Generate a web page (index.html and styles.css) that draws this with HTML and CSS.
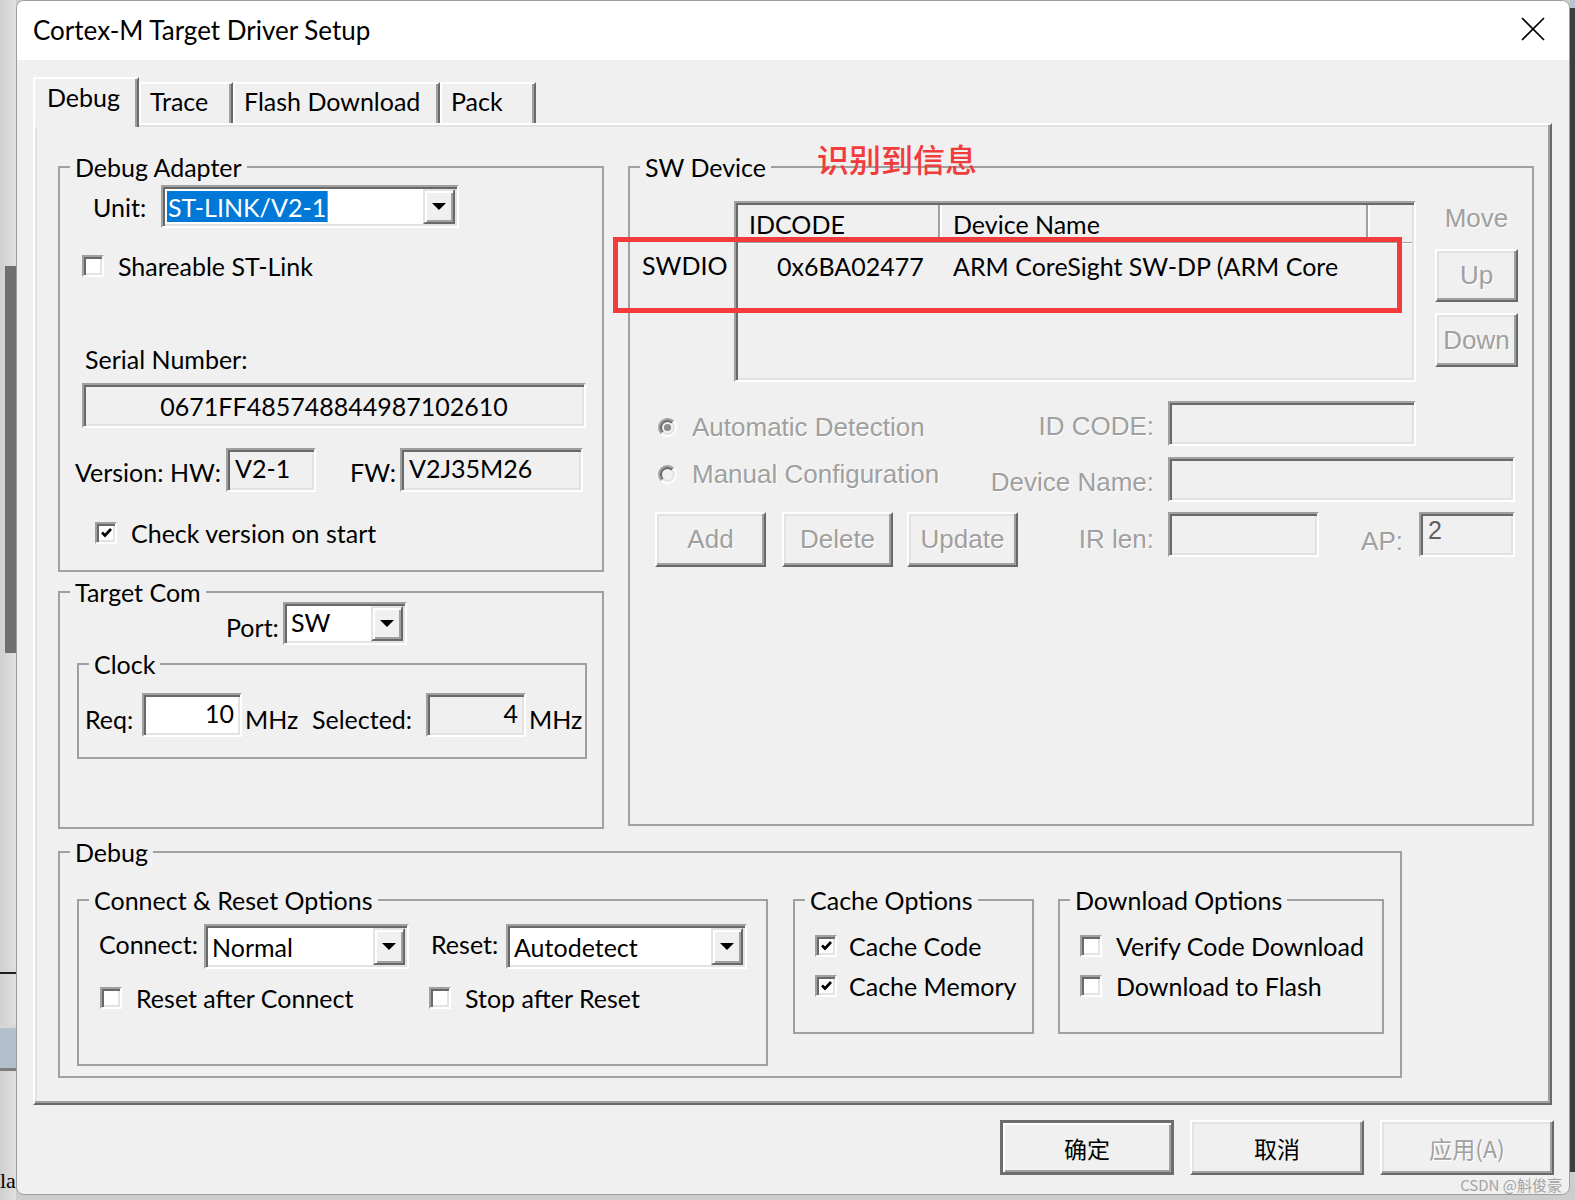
FILE: index.html
```html
<!DOCTYPE html>
<html lang="en">
<head>
<meta charset="utf-8">
<title>Cortex-M Target Driver Setup</title>
<link rel="stylesheet" href="styles.css">
</head>
<body>
<div class="screen">
  <div class="bg-left">
    <div class="thumb"></div>
    <div class="bl-line"></div>
    <div class="bl-band"></div>
    <div class="bl-text">la</div>
  </div>

  <div class="dialog">
    <div class="titlebar">
      <span class="title">Cortex-M Target Driver Setup</span>
      <span class="close"><svg width="24" height="24" viewBox="0 0 24 24"><path d="M1 1 L23 23 M23 1 L1 23" stroke="#000" stroke-width="1.7" fill="none"/></svg></span>
    </div>

    <div class="dbody">
      <div class="tabs">
        <div class="tab sel t-debug">Debug</div>
        <div class="tab t-trace">Trace</div>
        <div class="tab t-flash">Flash Download</div>
        <div class="tab t-pack">Pack</div>
      </div>

      <div class="panel">
        <div class="top">
          <div class="lcol">
            <fieldset class="group g-adapter">
              <legend>Debug Adapter</legend>
              <div class="unit-row">
                <span class="lbl">Unit:</span>
                <div class="combo c-unit">
                  <span class="combo-text"><span class="hl">ST-LINK/V2-1</span></span>
                  <span class="combo-btn"><svg width="14" height="7" viewBox="0 0 14 7"><polygon points="0,0 14,0 7,7" fill="#000"/></svg></span>
                </div>
              </div>
              <div class="chk chk-share"><span class="box"></span><span>Shareable ST-Link</span></div>
              <div class="serial-lbl">Serial Number:</div>
              <div class="field f-serial">0671FF485748844987102610</div>
              <div class="ver-row">
                <span class="l1">Version: HW:</span>
                <div class="field f-hw">V2-1</div>
                <span class="l2">FW:</span>
                <div class="field f-fw">V2J35M26</div>
              </div>
              <div class="chk chk-ver"><span class="box"><svg width="13" height="13" viewBox="0 0 13 13"><polyline points="2,6.5 5,9.5 11,3" fill="none" stroke="#000" stroke-width="2.6"/></svg></span><span>Check version on start</span></div>
            </fieldset>

            <fieldset class="group g-target">
              <legend>Target Com</legend>
              <div class="port-row">
                <span class="lbl">Port:</span>
                <div class="combo c-port">
                  <span class="combo-text">SW</span>
                  <span class="combo-btn"><svg width="14" height="7" viewBox="0 0 14 7"><polygon points="0,0 14,0 7,7" fill="#000"/></svg></span>
                </div>
              </div>
              <fieldset class="group g-clock">
                <legend>Clock</legend>
                <div class="req-row">
                  <span class="l-req lowlbl">Req:</span>
                  <div class="field f-req"><span class="num">10</span></div>
                  <span class="mhz lowlbl">MHz</span>
                  <span class="l-sel lowlbl">Selected:</span>
                  <div class="field f-sel"><span class="num">4</span></div>
                  <span class="mhz2 lowlbl">MHz</span>
                </div>
              </fieldset>
            </fieldset>
          </div>

          <fieldset class="group g-sw">
            <legend>SW Device</legend>
            <div class="dev-area">
              <div class="dev-rowhdr"><div class="swdio">SWDIO</div></div>
              <div class="table">
                <div class="thead">
                  <div class="h1">IDCODE</div>
                  <div class="h2">Device Name</div>
                  <div class="h3"></div>
                </div>
                <div class="trow">
                  <div class="c1">0x6BA02477</div>
                  <div class="c2">ARM CoreSight SW-DP (ARM Core</div>
                </div>
              </div>
              <div class="move-col">
                <div class="move-lbl dis">Move</div>
                <div class="btn btn-up dis">Up</div>
                <div class="btn btn-down dis">Down</div>
              </div>
            </div>

            <div class="opt-row row-a">
              <div class="radio radio-a dis">
                <svg width="19" height="19" viewBox="0 0 19 19"><circle cx="9.5" cy="9.5" r="8.5" fill="#f0f0f0"/><path d="M3.49 15.51 A8.5 8.5 0 0 1 15.51 3.49" fill="none" stroke="#a0a0a0" stroke-width="2"/><path d="M4.9 14.1 A6.5 6.5 0 0 1 14.1 4.9" fill="none" stroke="#696969" stroke-width="2"/><path d="M15.51 3.49 A8.5 8.5 0 0 1 3.49 15.51" fill="none" stroke="#ffffff" stroke-width="2"/><path d="M14.1 4.9 A6.5 6.5 0 0 1 4.9 14.1" fill="none" stroke="#e3e3e3" stroke-width="2"/><circle cx="9.5" cy="9.5" r="3.6" fill="#8c8c8c"/></svg>
                <span>Automatic Detection</span>
              </div>
              <span class="flbl flbl-a dis">ID CODE:</span>
              <div class="field f-id"></div>
            </div>

            <div class="opt-row row-b">
              <div class="radio radio-b dis">
                <svg width="19" height="19" viewBox="0 0 19 19"><circle cx="9.5" cy="9.5" r="8.5" fill="#f0f0f0"/><path d="M3.49 15.51 A8.5 8.5 0 0 1 15.51 3.49" fill="none" stroke="#a0a0a0" stroke-width="2"/><path d="M4.9 14.1 A6.5 6.5 0 0 1 14.1 4.9" fill="none" stroke="#696969" stroke-width="2"/><path d="M15.51 3.49 A8.5 8.5 0 0 1 3.49 15.51" fill="none" stroke="#ffffff" stroke-width="2"/><path d="M14.1 4.9 A6.5 6.5 0 0 1 4.9 14.1" fill="none" stroke="#e3e3e3" stroke-width="2"/></svg>
                <span>Manual Configuration</span>
              </div>
              <span class="flbl flbl-b dis">Device Name:</span>
              <div class="field f-dn"></div>
            </div>

            <div class="opt-row row-c">
              <div class="btns">
                <div class="btn b-add dis">Add</div>
                <div class="btn b-del dis">Delete</div>
                <div class="btn b-upd dis">Update</div>
              </div>
              <span class="flbl-ir dis">IR len:</span>
              <div class="field f-ir"></div>
              <span class="ap-lbl dis">AP:</span>
              <div class="field f-ap"><span class="ap-val">2</span></div>
            </div>
          </fieldset>
        </div>

        <fieldset class="group g-debug">
          <legend>Debug</legend>
          <div class="dbg-inner">
            <fieldset class="group g-conn">
              <legend>Connect &amp; Reset Options</legend>
              <div class="conn-row">
                <span class="l-conn">Connect:</span>
                <div class="combo c-conn">
                  <span class="combo-text">Normal</span>
                  <span class="combo-btn"><svg width="14" height="7" viewBox="0 0 14 7"><polygon points="0,0 14,0 7,7" fill="#000"/></svg></span>
                </div>
                <span class="l-reset">Reset:</span>
                <div class="combo c-reset">
                  <span class="combo-text">Autodetect</span>
                  <span class="combo-btn"><svg width="14" height="7" viewBox="0 0 14 7"><polygon points="0,0 14,0 7,7" fill="#000"/></svg></span>
                </div>
              </div>
              <div class="chk-row">
                <div class="chk chk-rac"><span class="box"></span><span>Reset after Connect</span></div>
                <div class="chk"><span class="box"></span><span>Stop after Reset</span></div>
              </div>
            </fieldset>

            <fieldset class="group g-cache">
              <legend>Cache Options</legend>
              <div class="chk opt-chk"><span class="box"><svg width="13" height="13" viewBox="0 0 13 13"><polyline points="2,6.5 5,9.5 11,3" fill="none" stroke="#000" stroke-width="2.6"/></svg></span><span>Cache Code</span></div>
              <div class="chk opt-chk"><span class="box"><svg width="13" height="13" viewBox="0 0 13 13"><polyline points="2,6.5 5,9.5 11,3" fill="none" stroke="#000" stroke-width="2.6"/></svg></span><span>Cache Memory</span></div>
            </fieldset>

            <fieldset class="group g-dl">
              <legend>Download Options</legend>
              <div class="chk opt-chk"><span class="box"></span><span>Verify Code Download</span></div>
              <div class="chk opt-chk"><span class="box"></span><span>Download to Flash</span></div>
            </fieldset>
          </div>
        </fieldset>
      </div>

      <div class="btnrow">
        <div class="btn dbtn def">确定</div>
        <div class="btn dbtn">取消</div>
        <div class="btn dbtn dis-cjk">应用(A)</div>
      </div>
    </div>

    <div class="annot-text">识别到信息</div>
    <div class="annot-box"></div>
    <div class="watermark">CSDN @斛俊豪</div>
  </div>

  <div class="bg-right"></div>
</div>
</body>
</html>
```

FILE: styles.css
```css
* { box-sizing: border-box; }
html, body { margin: 0; padding: 0; }
body {
  width: 1575px;
  height: 1200px;
  overflow: hidden;
  background: #cdcdcd;
  font-family: Lato, "Noto Sans", sans-serif;
  font-size: 25px;
  color: #000;
}
.screen { display: flex; height: 1200px; }

/* background window fragments */
.bg-left {
  width: 16px;
  flex: none;
  background: linear-gradient(to right, #cfcfcf, #e0e0e0);
  display: flex;
  flex-direction: column;
  overflow: hidden;
}
.thumb { margin: 266px 0 0 5px; width: 11px; height: 387px; background: #6f6f6f; }
.bl-line { margin-top: 319px; height: 2px; background: #1e1e1e; }
.bl-band { margin-top: 51px; height: 46px; background: #b3bfcc; border-top: 3px solid #d8d8d8; border-bottom: 3px solid #7d7d7d; }
.bl-text { margin-top: 98px; font-family: "Liberation Serif", serif; font-size: 22px; line-height: 24px; }
.bg-right {
  width: 5px;
  flex: none;
  background: linear-gradient(#b7c3d0 0, #b7c3d0 8px, #3c3c3c 8px, #3c3c3c 1172px, #cdcdcd 1172px);
}

/* dialog */
.dialog {
  width: 1554px;
  height: 1195px;
  flex: none;
  position: relative;
  background: #f0f0f0;
  border: 1px solid #9d9d9d;
  border-radius: 8px;
  overflow: hidden;
  display: flex;
  flex-direction: column;
}
.titlebar {
  height: 59px;
  flex: none;
  background: #fff;
  display: flex;
  align-items: center;
  padding: 0 24px 2px 16px;
}
.title { flex: 1; font-size: 26px; line-height: 30px; }
.close { width: 24px; height: 24px; display: flex; margin-bottom: 2px; }

.dbody { flex: 1; display: flex; flex-direction: column; padding: 0 15px 0 16px; }

/* tabs */
.tabs { display: flex; align-items: flex-end; height: 46px; margin-top: 17px; }
.tab {
  height: 41px;
  border-style: solid;
  border-width: 2px 2px 0 2px;
  border-color: #fff #696969 transparent #fff;
  box-shadow: inset -2px 0 0 #a0a0a0;
  display: flex;
  align-items: center;
  padding-left: 9px;
  padding-bottom: 6px;
  line-height: 30px;
  white-space: nowrap;
}
.tab.sel {
  height: 50px;
  margin-bottom: -4px;
  position: relative;
  z-index: 1;
  background: #f0f0f0;
  padding-left: 12px;
  padding-bottom: 12px;
}
.t-debug { width: 106px; }
.t-trace { width: 94px; }
.t-flash { width: 207px; }
.t-pack { width: 96px; }

/* tab panel */
.panel {
  width: 1519px;
  border: 2px solid;
  border-color: #fff #696969 #696969 #fff;
  box-shadow: inset -2px -2px 0 #a0a0a0, inset 2px 2px 0 #e3e3e3;
  padding: 28px 16px 25px 23px;
}
.top { display: flex; align-items: flex-start; gap: 24px; }
.lcol { width: 546px; flex: none; }

/* group boxes */
.group {
  margin: 0;
  padding: 0;
  border: 2px solid #a0a0a0;
  min-width: 0;
}
.group > legend {
  padding: 0 5px;
  margin-left: 10px;
  font-size: 25px;
  line-height: 28px;
  height: 28px;
  white-space: nowrap;
}

/* shared controls */
.combo {
  display: flex;
  background: #fff;
  border: 2px solid;
  border-color: #a0a0a0 #fff #fff #a0a0a0;
  box-shadow: inset 2px 2px 0 #696969, inset -2px -2px 0 #e3e3e3;
  padding: 2px;
}
.combo-text { flex: 1; display: flex; align-items: center; padding-left: 4px; white-space: nowrap; overflow: hidden; }
.combo-btn {
  width: 32px;
  flex: none;
  background: #f0f0f0;
  border: 2px solid;
  border-color: #e3e3e3 #696969 #696969 #e3e3e3;
  box-shadow: inset 2px 2px 0 #fff, inset -2px -2px 0 #a0a0a0;
  display: flex;
  align-items: center;
  justify-content: center;
}
.field {
  height: 45px;
  background: #f0f0f0;
  border: 2px solid;
  border-color: #a0a0a0 #fff #fff #a0a0a0;
  box-shadow: inset 2px 2px 0 #696969, inset -2px -2px 0 #e3e3e3;
  display: flex;
  align-items: center;
  padding: 0 7px;
  white-space: nowrap;
}
.chk { display: flex; align-items: center; height: 21px; white-space: nowrap; }
.chk .box {
  width: 22px;
  height: 22px;
  flex: none;
  background: #fff;
  border: 2px solid;
  border-color: #a0a0a0 #fff #fff #a0a0a0;
  box-shadow: inset 2px 2px 0 #696969, inset -2px -2px 0 #e3e3e3;
  margin-right: 14px;
  display: flex;
  align-items: center;
  justify-content: center;
}
.btn {
  background: #f0f0f0;
  border: 2px solid;
  border-color: #fff #696969 #696969 #fff;
  box-shadow: inset -2px -2px 0 #a0a0a0, inset 2px 2px 0 #e3e3e3;
  display: flex;
  align-items: center;
  justify-content: center;
  white-space: nowrap;
}
.dis {
  font-family: "Liberation Sans", Arial, sans-serif;
  font-size: 26px;
  color: #a0a0a0;
  text-shadow: 1px 1px 0 #fff;
}

/* Debug Adapter */
.g-adapter { padding-bottom: 27px; }
.unit-row { display: flex; align-items: center; height: 43px; margin: 4px 0 0 33px; }
.unit-row .lbl { width: 68px; }
.c-unit { width: 298px; height: 43px; }
.c-unit .combo-text { padding-left: 2px; }
.hl {
  background: #0078d7;
  color: #fff;
  height: 31px;
  display: flex;
  align-items: center;
  padding: 0 1px;
  border-right: 1px solid #e2803c;
}
.chk-share { margin: 27px 0 0 22px; }
.serial-lbl { margin: 68px 0 0 25px; height: 30px; line-height: 30px; }
.f-serial { margin: 9px 0 0 22px; width: 504px; justify-content: center; }
.ver-row { display: flex; align-items: center; height: 44px; margin: 20px 0 0 15px; }
.ver-row .l1 { width: 151px; padding-top: 4px; }
.ver-row .l2 { width: 50px; margin-left: 34px; padding-top: 4px; }
.f-hw { width: 90px; height: 44px; padding-bottom: 4px; }
.f-fw { width: 183px; height: 44px; padding-bottom: 4px; }
.chk-ver { margin: 30px 0 0 35px; }

/* Target Com */
.g-target { margin-top: 6px; padding-bottom: 68px; }
.port-row { display: flex; align-items: center; height: 43px; margin: -4px 0 0 166px; }
.port-row .lbl { width: 57px; padding-top: 6px; }
.c-port { width: 124px; height: 43px; }
.c-port .combo-text { padding-bottom: 4px; }
.g-clock { margin: 5px 0 0 17px; width: 510px; padding-bottom: 20px; }
.req-row { display: flex; align-items: center; height: 44px; margin: 15px 0 0 6px; }
.lowlbl { padding-top: 8px; white-space: nowrap; }
.l-req { width: 57px; }
.f-req { width: 100px; height: 44px; background: #fff; justify-content: flex-end; padding: 0 6px 5px 0; }
.f-sel { width: 100px; height: 44px; justify-content: flex-end; padding: 0 6px 5px 0; }
.mhz { width: 67px; margin-left: 3px; }
.l-sel { width: 114px; }
.mhz2 { margin-left: 3px; }

/* SW Device */
.g-sw { width: 906px; flex: none; padding-bottom: 257px; }
.dev-area { display: flex; margin-top: 20px; height: 181px; }
.dev-rowhdr { width: 104px; flex: none; padding: 42px 0 0 12px; }
.swdio { height: 44px; display: flex; align-items: center; }
.table {
  width: 682px;
  flex: none;
  height: 181px;
  border: 2px solid;
  border-color: #a0a0a0 #fff #fff #a0a0a0;
  box-shadow: inset 2px 2px 0 #696969, inset -2px -2px 0 #e3e3e3;
  padding: 2px 2px 0 2px;
  overflow: hidden;
}
.thead { display: flex; height: 38px; border-bottom: 1px solid #a0a0a0; box-shadow: 0 1px 0 #fff; }
.thead > div { display: flex; align-items: center; height: 37px; white-space: nowrap; }
.h1 { width: 202px; padding-left: 11px; border-right: 2px solid #a0a0a0; }
.h2 { width: 428px; padding-left: 11px; border-left: 2px solid #fff; border-right: 2px solid #a0a0a0; }
.h3 { flex: 1; border-left: 2px solid #fff; }
.trow { display: flex; height: 44px; margin-top: 1px; }
.trow > div { display: flex; align-items: center; white-space: nowrap; overflow: hidden; }
.c1 { width: 204px; padding-left: 39px; }
.c2 { width: 426px; padding-left: 11px; }
.move-col { margin-left: 19px; width: 83px; flex: none; display: flex; flex-direction: column; }
.move-lbl { height: 34px; display: flex; align-items: center; justify-content: center; }
.btn-up { margin-top: 14px; height: 53px; }
.btn-down { margin-top: 11px; height: 54px; }

.opt-row { display: flex; align-items: center; }
.row-a { margin-top: 19px; height: 45px; }
.row-b { margin-top: 11px; height: 45px; }
.row-c { margin-top: 10px; height: 55px; align-items: flex-start; }
.radio { display: flex; align-items: center; margin-left: 28px; width: 322px; flex: none; white-space: nowrap; }
.radio svg { margin-right: 15px; flex: none; }
.radio-a { padding-top: 8px; }
.radio-b { padding-bottom: 11px; }
.flbl { width: 174px; flex: none; margin-right: 14px; text-align: right; white-space: nowrap; }
.flbl-a { padding-top: 6px; }
.flbl-b { padding-top: 5px; }
.f-id { width: 248px; }
.f-dn { width: 347px; }
.btns { display: flex; margin-left: 25px; width: 363px; flex: none; }
.btns .btn { width: 111px; height: 55px; }
.b-del { margin-left: 16px; }
.b-upd { margin-left: 14px; }
.flbl-ir { width: 136px; flex: none; margin-right: 14px; height: 55px; display: flex; align-items: center; justify-content: flex-end; }
.f-ir { width: 151px; }
.ap-lbl { width: 100px; flex: none; padding-right: 16px; height: 55px; display: flex; align-items: center; justify-content: flex-end; padding-top: 4px; }
.f-ap { width: 96px; align-items: flex-start; padding-top: 2px; }
.ap-val { font-family: "Liberation Sans", Arial, sans-serif; font-size: 25px; color: #606060; }

/* Debug group */
.g-debug { margin-top: 9px; width: 1344px; padding-bottom: 10px; }
.dbg-inner { display: flex; align-items: flex-start; margin: 20px 0 0 17px; }
.g-conn { width: 691px; flex: none; padding-bottom: 56px; }
.conn-row { display: flex; align-items: center; height: 45px; margin: 10px 0 0 20px; }
.l-conn { width: 105px; padding-bottom: 6px; }
.c-conn { width: 205px; height: 45px; }
.l-reset { margin-left: 22px; width: 75px; padding-bottom: 6px; }
.c-reset { width: 241px; height: 45px; }
.chk-row { display: flex; margin: 18px 0 0 21px; }
.chk-rac { width: 329px; }
.g-cache { width: 241px; flex: none; margin-left: 25px; padding-bottom: 36px; }
.g-cache .chk .box { margin-right: 12px; }
.g-dl { width: 326px; flex: none; margin-left: 24px; padding-bottom: 36px; }
.opt-chk { margin: 21px 0 0 20px; }
.opt-chk + .opt-chk { margin-top: 19px; }

/* dialog buttons */
.btnrow { display: flex; justify-content: flex-end; gap: 16px; margin-top: 15px; }
.dbtn {
  width: 174px;
  height: 55px;
  font-family: "Noto Sans CJK SC", sans-serif;
  font-size: 23px;
}
.dbtn.def {
  border: 3px solid #6d6d6d;
  box-shadow: inset 2px 2px 0 #fff, inset -2px -2px 0 #a0a0a0;
}
.dis-cjk { color: #a0a0a0; text-shadow: 1px 1px 0 #fff; }

/* overlays: screenshot annotation and watermark */
.annot-text {
  position: absolute;
  left: 800px;
  top: 138px;
  font-family: "Noto Sans CJK SC", sans-serif;
  font-size: 32px;
  font-weight: 500;
  line-height: 38px;
  color: #f23c3c;
  white-space: nowrap;
}
.annot-box {
  position: absolute;
  left: 596px;
  top: 236px;
  width: 789px;
  height: 76px;
  border: 5px solid #f33b3b;
}
.watermark {
  position: absolute;
  right: 7px;
  bottom: 0;
  font-family: "Noto Sans CJK SC", sans-serif;
  font-size: 15px;
  line-height: 18px;
  color: #a4a4a4;
  white-space: nowrap;
}
```
